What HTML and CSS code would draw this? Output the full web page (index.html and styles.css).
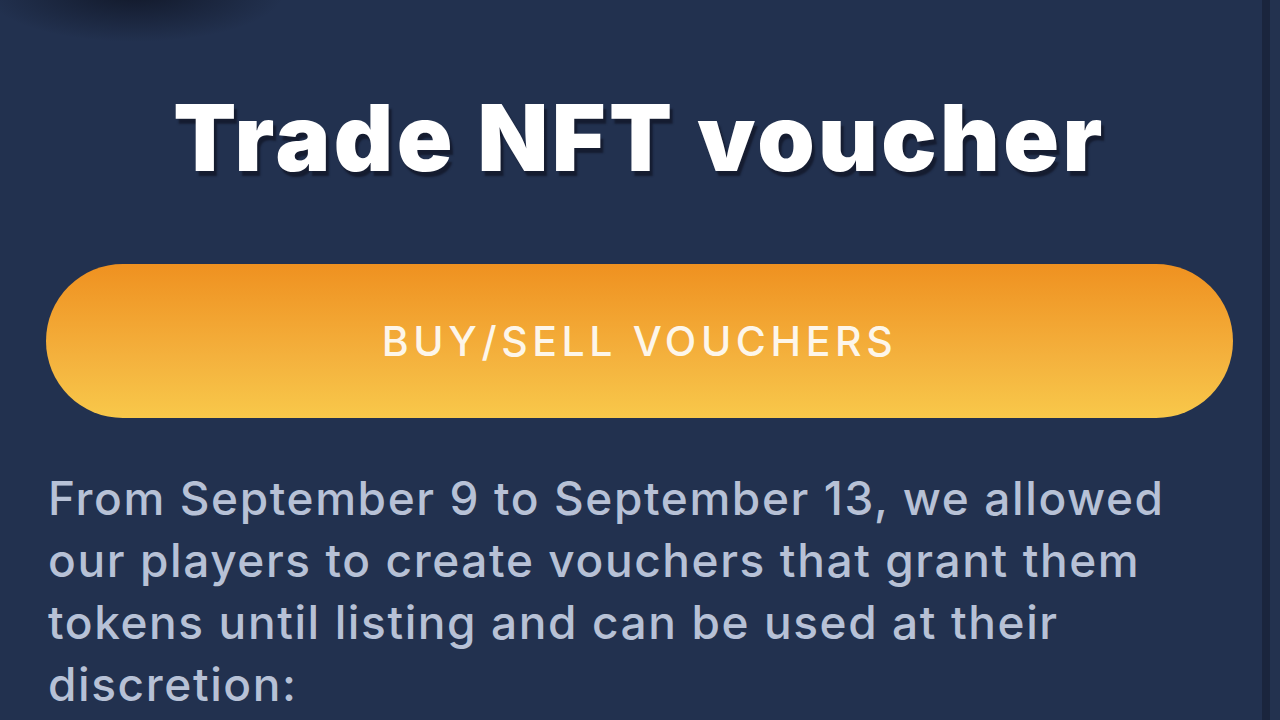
FILE: index.html
```html
<!DOCTYPE html>
<html lang="en">
<head>
    <meta charset="UTF-8">
    <meta name="viewport" content="width=device-width, initial-scale=1.0">
    <title>Trade NFT voucher</title>
    <link rel="stylesheet" href="styles.css">
</head>
<body>
    <div class="screen">
        <main class="page">
            <h1 class="title">Trade NFT voucher</h1>
            <button class="trade-btn" type="button">BUY/SELL VOUCHERS</button>
            <p class="info">From September 9 to September 13, we allowed our players to create vouchers that grant them tokens until listing and can be used at their discretion:</p>
        </main>
        <div class="edge"></div>
        <div class="gutter"></div>
    </div>
</body>
</html>
```

FILE: styles.css
```css
html, body {
    margin: 0;
    height: 100%;
}
body {
    background-color: #22314f;
    font-family: Inter, "Noto Sans", sans-serif;
    overflow: hidden;
}
.screen {
    display: flex;
    height: 720px;
}
.page {
    width: 1262px;
    box-sizing: border-box;
    padding: 0 29px 0 46px;
    background:
        radial-gradient(ellipse 150px 50px at 135px -8px, rgba(16, 22, 38, 0.9), rgba(16, 22, 38, 0) 100%),
        #22314f;
}
.edge {
    width: 8px;
    background-color: #1a253d;
}
.gutter {
    flex: 1;
    background-color: #23324f;
}
.title {
    margin: 0;
    padding-top: 84px;
    height: 108px;
    font-size: 92px;
    line-height: 108px;
    font-weight: 900;
    color: #ffffff;
    text-align: center;
    letter-spacing: 3.4px;
    text-shadow: 3px 5px 2px #151c30;
}
.trade-btn {
    display: block;
    width: 100%;
    height: 154px;
    margin-top: 72px;
    border: none;
    border-radius: 77px;
    background: linear-gradient(180deg, #ef9120 0%, #f4b13d 60%, #f8c84a 100%);
    color: #fdf6ea;
    font-family: Inter, "Noto Sans", sans-serif;
    font-size: 41px;
    font-weight: 500;
    letter-spacing: 4.6px;
    cursor: pointer;
}
.info {
    margin: 49px 0 0 2px;
    width: 1170px;
    font-size: 46px;
    line-height: 62px;
    font-weight: 500;
    letter-spacing: 1.6px;
    color: #b7c1d6;
}
```
